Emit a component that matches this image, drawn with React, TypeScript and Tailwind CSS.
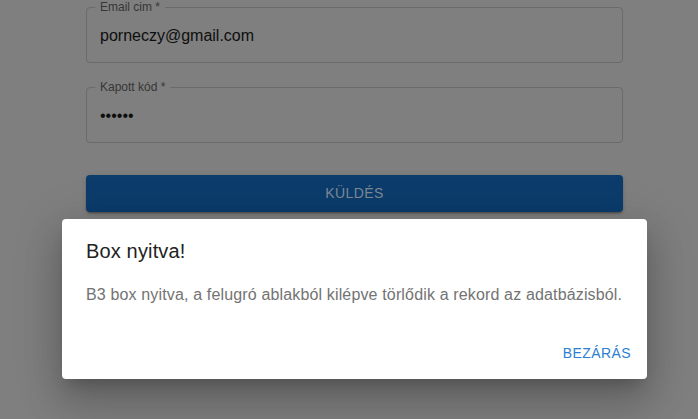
import React from "react";

function Field({ label, value }: { label: string; value: string }) {
  return (
    <div className="relative h-[56px] rounded-[4px] border border-[#6a6a6a] flex items-center pl-[13px]">
      <span className="absolute -top-[8px] left-[8px] px-[5px] bg-[#7f7f7f] text-[12px] leading-[14px] text-[#363636]">
        {label}
      </span>
      <span className="text-[16px] leading-[20px] text-[#0e0e0e] mt-[1px]">{value}</span>
    </div>
  );
}

export default function App() {
  return (
    <div
      className="relative w-full h-[419px] overflow-hidden bg-[#7f7f7f]"
      style={{ fontFamily: '"Liberation Sans", Arial, sans-serif' }}
    >
      <div className="ml-[86px] w-[537px] pt-[7px] flex flex-col">
        <Field label="Email cim *" value="porneczy@gmail.com" />
        <div className="h-[24px]" />
        <Field label="Kapott kód *" value="••••••" />
        <div className="h-[32px]" />
        <div className="h-[37px] rounded-[4px] bg-[#0b3c6b] flex items-center justify-center text-[14px] tracking-[0.4px] text-[#7d8996] shadow-[0px_3px_1px_-2px_rgba(0,0,0,0.2),0px_2px_2px_0px_rgba(0,0,0,0.14),0px_1px_5px_0px_rgba(0,0,0,0.12)]">
          KÜLDÉS
        </div>
      </div>

      <div className="absolute left-[62px] top-[219px] w-[585px] bg-white rounded-[4px] flex flex-col shadow-[0px_11px_15px_-7px_rgba(0,0,0,0.2),0px_24px_38px_3px_rgba(0,0,0,0.14),0px_9px_46px_8px_rgba(0,0,0,0.12)]">
        <div className="px-[24px] pt-[16px] text-[20px] leading-[32px] tracking-[0.15px] text-[#222222]">
          Box nyitva!
        </div>
        <div className="px-[24px] pt-[16px] pb-[20px] text-[16px] leading-[24px] tracking-[0.15px] text-[#737373]">
          B3 box nyitva, a felugró ablakból kilépve törlődik a rekord az adatbázisból.
        </div>
        <div className="flex justify-end p-[8px]">
          <div className="h-[36px] px-[8px] flex items-center text-[14px] tracking-[0.4px] text-[#2a7fd2]">
            BEZÁRÁS
          </div>
        </div>
      </div>
    </div>
  );
}
